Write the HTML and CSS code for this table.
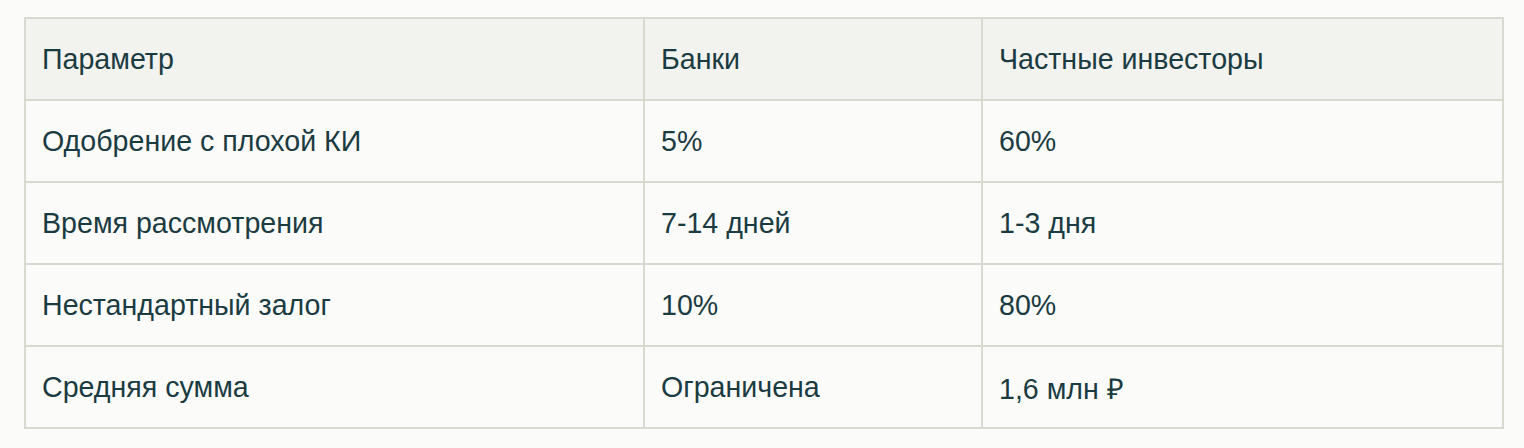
FILE: index.html
```html
<!DOCTYPE html>
<html lang="ru">
<head>
<meta charset="utf-8">
<link rel="stylesheet" href="styles.css">
</head>
<body>
<table class="cmp">
  <thead>
    <tr><th class="c1">Параметр</th><th class="c2">Банки</th><th class="c3">Частные инвесторы</th></tr>
  </thead>
  <tbody>
    <tr><td>Одобрение с плохой КИ</td><td>5%</td><td>60%</td></tr>
    <tr><td>Время рассмотрения</td><td>7-14 дней</td><td>1-3 дня</td></tr>
    <tr><td>Нестандартный залог</td><td>10%</td><td>80%</td></tr>
    <tr><td>Средняя сумма</td><td>Ограничена</td><td>1,6 млн ₽</td></tr>
  </tbody>
</table>
</body>
</html>
```
FILE: styles.css
```css
html, body { margin: 0; padding: 0; background: #fbfbf9; }
body { padding: 17px 20px 0 24px; }
.cmp {
  width: 1480px;
  border-collapse: collapse;
  table-layout: fixed;
  font-family: "Liberation Sans", Arial, sans-serif;
  font-size: 28.6px;
  color: #1b3b42;
}
.cmp th, .cmp td {
  border: 2px solid #d9d9d0;
  height: 80px;
  padding: 0 16px;
  text-align: left;
  font-weight: 400;
  vertical-align: middle;
}
.cmp thead th { background: #f2f2ee; }
.c1 { width: 585px; }
.c2 { width: 304px; }
```
